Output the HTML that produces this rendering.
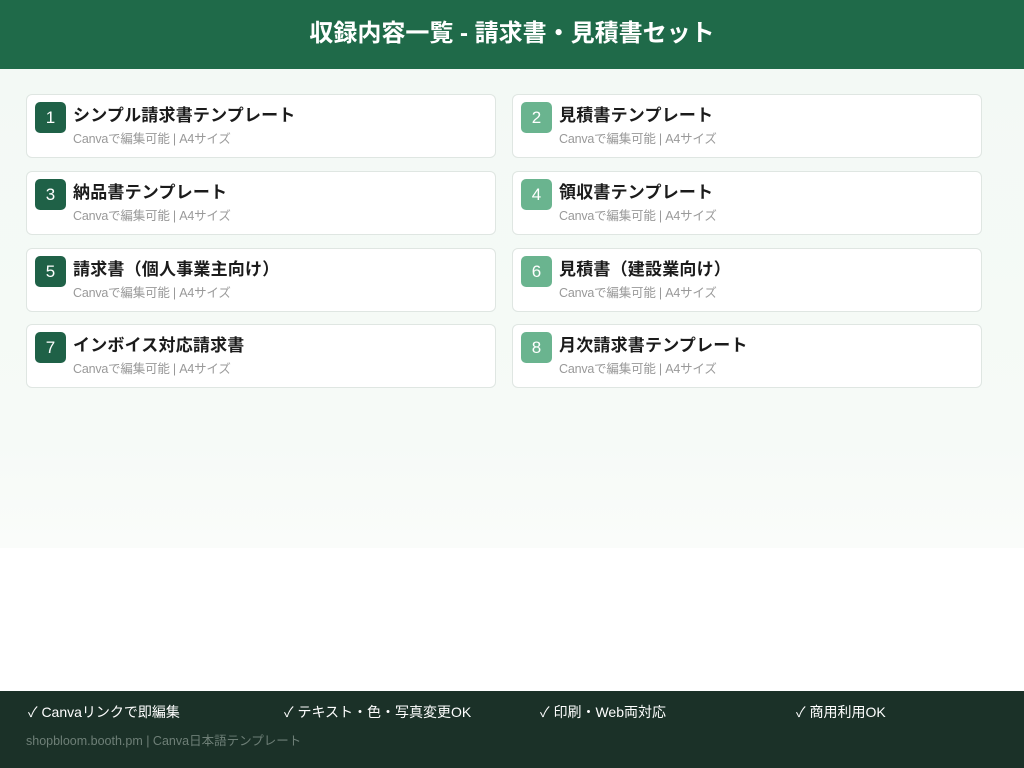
<!DOCTYPE html>
<html><head><meta charset="utf-8"><style>
*{margin:0;padding:0;box-sizing:border-box}
body{width:1024px;height:768px;position:relative;overflow:hidden;font-family:"Liberation Sans","Noto Sans CJK JP",sans-serif;background:linear-gradient(#f3f9f5 69px,#f6faf7 440px,#fafcfa 548px,#fff 548px)}
.hd{position:absolute;left:0;top:0;width:1024px;height:69px;background:#1f6a49;color:#fff;font-size:24px;font-weight:bold;text-align:center;line-height:68px}
.c{position:absolute;width:470px;height:64px;background:#fff;border:1px solid #dfe6e2;border-radius:6px}
.b{position:absolute;left:8px;top:7px;width:31px;height:31px;border-radius:5px;color:#fff;font-size:17px;text-align:center;line-height:31px}
.d{background:#1f6147}.l{background:#6ab48f}
.t{position:absolute;left:46px;top:6px;font-size:17px;font-weight:bold;color:#1b1b1b;letter-spacing:0.2px}
.s{position:absolute;left:46px;top:33px;font-size:12.5px;color:#999;letter-spacing:-0.2px}
.ft{position:absolute;left:0;top:691px;width:1024px;height:77px;background:#1b3128}
.f{position:absolute;top:12px;color:#fff;font-size:14px;line-height:18px}
.fs{position:absolute;left:26px;top:41px;color:#6e7f77;font-size:12.5px;line-height:18px}
</style></head><body>
<div class="hd">収録内容一覧 - 請求書・見積書セット</div>
<div class="c" style="left:26px;top:94px"><div class="b d">1</div><div class="t">シンプル請求書テンプレート</div><div class="s">Canvaで編集可能 | A4サイズ</div></div>
<div class="c" style="left:512px;top:94px"><div class="b l">2</div><div class="t">見積書テンプレート</div><div class="s">Canvaで編集可能 | A4サイズ</div></div>
<div class="c" style="left:26px;top:171px"><div class="b d">3</div><div class="t">納品書テンプレート</div><div class="s">Canvaで編集可能 | A4サイズ</div></div>
<div class="c" style="left:512px;top:171px"><div class="b l">4</div><div class="t">領収書テンプレート</div><div class="s">Canvaで編集可能 | A4サイズ</div></div>
<div class="c" style="left:26px;top:248px"><div class="b d">5</div><div class="t">請求書（個人事業主向け）</div><div class="s">Canvaで編集可能 | A4サイズ</div></div>
<div class="c" style="left:512px;top:248px"><div class="b l">6</div><div class="t">見積書（建設業向け）</div><div class="s">Canvaで編集可能 | A4サイズ</div></div>
<div class="c" style="left:26px;top:324px"><div class="b d">7</div><div class="t">インボイス対応請求書</div><div class="s">Canvaで編集可能 | A4サイズ</div></div>
<div class="c" style="left:512px;top:324px"><div class="b l">8</div><div class="t">月次請求書テンプレート</div><div class="s">Canvaで編集可能 | A4サイズ</div></div>
<div class="ft">
<div class="f" style="left:28px">✓ Canvaリンクで即編集</div>
<div class="f" style="left:284px">✓ テキスト・色・写真変更OK</div>
<div class="f" style="left:540px">✓ 印刷・Web両対応</div>
<div class="f" style="left:796px">✓ 商用利用OK</div>
<div class="fs">shopbloom.booth.pm | Canva日本語テンプレート</div>
</div>
</body></html>
